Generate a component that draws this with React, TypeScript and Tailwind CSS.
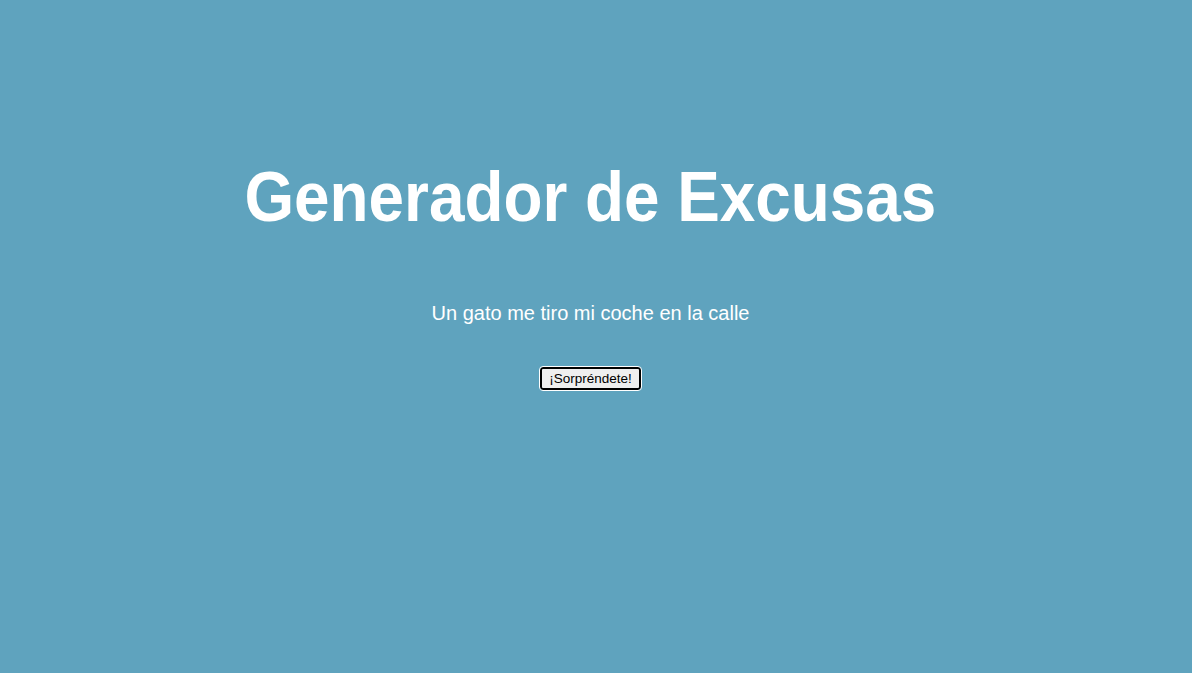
export default function App() {
  return (
    <div className="min-h-[673px] w-full bg-[#5fa3be] font-['Liberation_Sans',Arial,sans-serif] text-white flex flex-col items-center pr-[11px]">
      <h1 className="mt-[155px] text-[70px] font-bold leading-[84px] scale-x-[0.912]">Generador de Excusas</h1>
      <p className="mt-[62px] text-[20px] leading-[24px]">Un gato me tiro mi coche en la calle</p>
      <button className="mt-[42px] h-[23px] px-[7px] text-[13.5px] leading-[15px] text-black bg-[#efefef] border-2 border-black rounded-[3px] outline outline-1 outline-white">
        ¡Sorpréndete!
      </button>
    </div>
  );
}
